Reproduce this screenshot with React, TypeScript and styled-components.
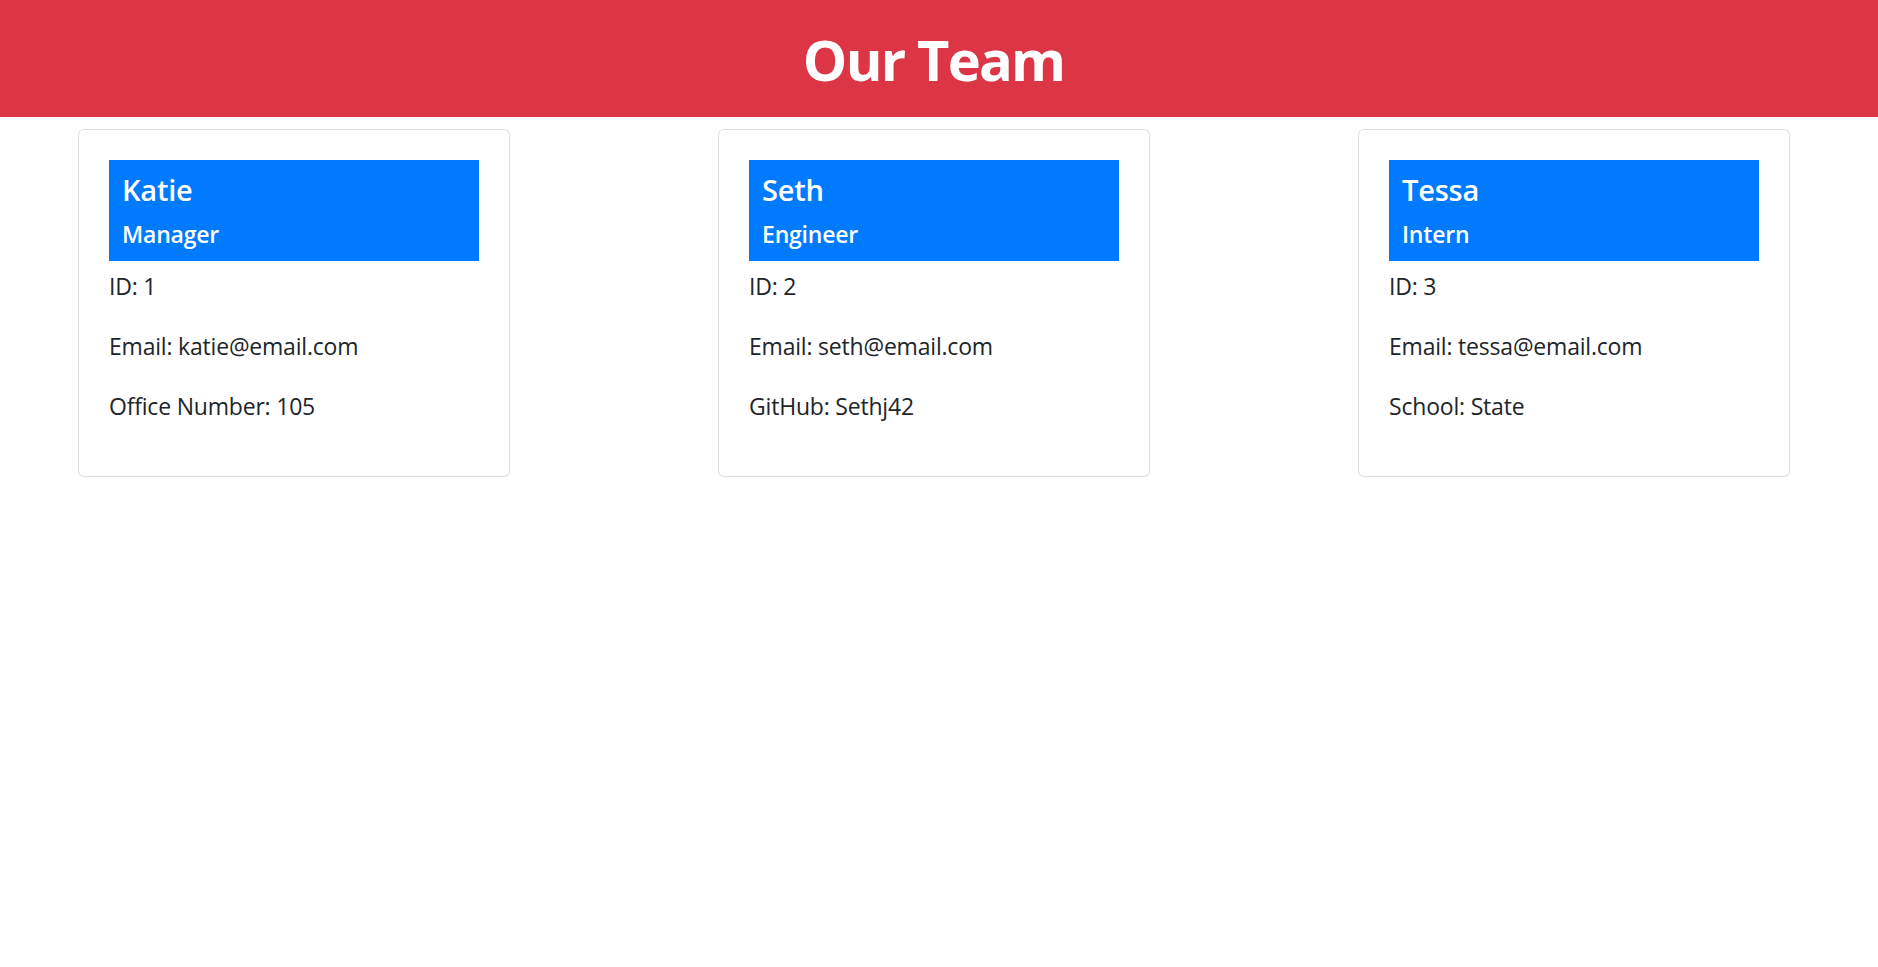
import React from "react";
import styled, { createGlobalStyle } from "styled-components";

const GlobalStyle = createGlobalStyle`
  html, body {
    margin: 0;
    padding: 0;
    background: #ffffff;
  }
  body {
    font-family: "Open Sans", "Noto Sans", "Liberation Sans", sans-serif;
    color: #212529;
  }
  * { box-sizing: border-box; }
`;

const Page = styled.div`
  min-height: 967px;
  background: #ffffff;
`;

const Banner = styled.header`
  height: 117px;
  background: #dc3545;
  display: flex;
  align-items: center;
  justify-content: center;
`;

const Title = styled.h1`
  margin: 0;
  padding: 2px 11px 0 0;
  font-size: 56px;
  font-weight: 700;
  line-height: 1.2;
  color: #ffffff;
  letter-spacing: -1.8px;
`;

const CardRow = styled.main`
  display: grid;
  grid-template-columns: repeat(3, 432px);
  column-gap: 208px;
  padding: 12px 0 0 78px;
`;

const Card = styled.section`
  border: 1px solid rgba(0, 0, 0, 0.125);
  border-radius: 6px;
  padding: 30px 30px 28px;
  background: #ffffff;
`;

const CardHead = styled.div`
  background: #007bff;
  color: #ffffff;
  padding: 12px 12px 12px 13px;
`;

const Name = styled.h5`
  margin: 0 0 12px;
  font-size: 29px;
  font-weight: 600;
  line-height: 36px;
  letter-spacing: -0.2px;
`;

const Role = styled.h6`
  margin: 0;
  font-size: 23px;
  font-weight: 600;
  line-height: 29px;
  letter-spacing: -0.2px;
`;

const Details = styled.div`
  padding-top: 7px;
`;

const Line = styled.p`
  margin: 0 0 24px;
  font-size: 23px;
  line-height: 36px;
  color: #212529;
  letter-spacing: -0.2px;
`;

type Member = {
  name: string;
  role: string;
  id: number;
  email: string;
  extraLabel: string;
  extraValue: string;
};

const team: Member[] = [
  { name: "Katie", role: "Manager", id: 1, email: "katie@email.com", extraLabel: "Office Number", extraValue: "105" },
  { name: "Seth", role: "Engineer", id: 2, email: "seth@email.com", extraLabel: "GitHub", extraValue: "Sethj42" },
  { name: "Tessa", role: "Intern", id: 3, email: "tessa@email.com", extraLabel: "School", extraValue: "State" },
];

export default function App() {
  return (
    <>
      <GlobalStyle />
      <Page>
        <Banner>
          <Title>Our Team</Title>
        </Banner>
        <CardRow>
          {team.map((m) => (
            <Card key={m.id}>
              <CardHead>
                <Name>{m.name}</Name>
                <Role>{m.role}</Role>
              </CardHead>
              <Details>
                <Line>ID: {m.id}</Line>
                <Line>Email: {m.email}</Line>
                <Line>
                  {m.extraLabel}: {m.extraValue}
                </Line>
              </Details>
            </Card>
          ))}
        </CardRow>
      </Page>
    </>
  );
}
